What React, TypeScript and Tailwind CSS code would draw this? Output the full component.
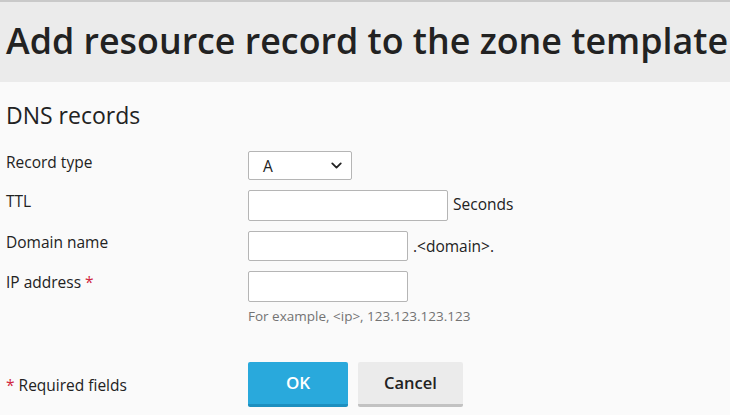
import { ChevronDown } from 'lucide-react';

export default function App() {
  return (
    <div className="min-h-[415px] w-[730px] overflow-hidden bg-[#fafafa] text-[#222] font-['Open_Sans',sans-serif]">
      {/* Page header */}
      <div className="h-[82px] overflow-hidden border-t-2 border-[#c9c9c9] bg-[#ebebeb] pl-[6px] pt-[14px]">
        <h1 className="whitespace-nowrap text-[35.8px] leading-[48px] font-semibold text-[#222]">
          Add resource record to the zone template
        </h1>
      </div>

      <div className="px-[6px]">
        <h2 className="mt-[17px] text-[23px] leading-[32px] text-[#222]">DNS records</h2>

        <div className="mt-[20px] flex flex-col gap-[10px]">
          {/* Record type */}
          <div className="flex">
            <label className="w-[242px] pt-[1px] text-[15.5px] leading-[20px]">Record type</label>
            <div className="relative flex h-[29px] w-[104px] items-center rounded-[2px] border border-[#b5b5b5] bg-white pl-[14px] text-[15.5px]">
              <span className="pt-[3px]">A</span>
              <ChevronDown className="absolute right-[6px] top-[5px] h-[17px] w-[17px] text-[#222]" strokeWidth={2.6} />
            </div>
          </div>

          {/* TTL */}
          <div className="flex">
            <label className="w-[242px] pt-[1px] text-[15.5px] leading-[20px]">TTL</label>
            <input className="h-[31px] w-[200px] rounded-[2px] border border-[#b5b5b5] bg-white" />
            <span className="ml-[5px] pt-[4px] text-[15.5px] leading-[20px]">Seconds</span>
          </div>

          {/* Domain name */}
          <div className="flex">
            <label className="w-[242px] pt-[1px] text-[15.5px] leading-[20px]">Domain name</label>
            <input className="h-[30px] w-[160px] rounded-[2px] border border-[#b5b5b5] bg-white" />
            <span className="ml-[5px] pt-[5px] text-[15.5px] leading-[20px]">.&lt;domain&gt;.</span>
          </div>

          {/* IP address */}
          <div className="flex">
            <label className="w-[242px] pt-[1px] text-[15.5px] leading-[20px]">
              IP address <span className="text-[#d0263e]">*</span>
            </label>
            <div className="flex flex-col">
              <input className="h-[31px] w-[160px] rounded-[2px] border border-[#b5b5b5] bg-white" />
              <span className="mt-[5px] text-[13.5px] leading-[18px] text-[#737373]">
                For example, &lt;ip&gt;, 123.123.123.123
              </span>
            </div>
          </div>
        </div>

        {/* Footer */}
        <div className="mt-[37px] flex items-center">
          <div className="w-[242px] text-[15.5px] leading-[20px]">
            <span className="text-[#d0263e]">*</span> Required fields
          </div>
          <button className="h-[45px] w-[100px] rounded-[2px] border-b-[3px] border-[#1d8fbf] bg-[#29a9dc] text-[17px] font-semibold text-white">
            OK
          </button>
          <button className="ml-[10px] h-[45px] w-[105px] rounded-[2px] border-b-[3px] border-[#c2c2c2] bg-[#ebebeb] text-[16.5px] font-semibold text-[#222]">
            Cancel
          </button>
        </div>
      </div>
    </div>
  );
}
